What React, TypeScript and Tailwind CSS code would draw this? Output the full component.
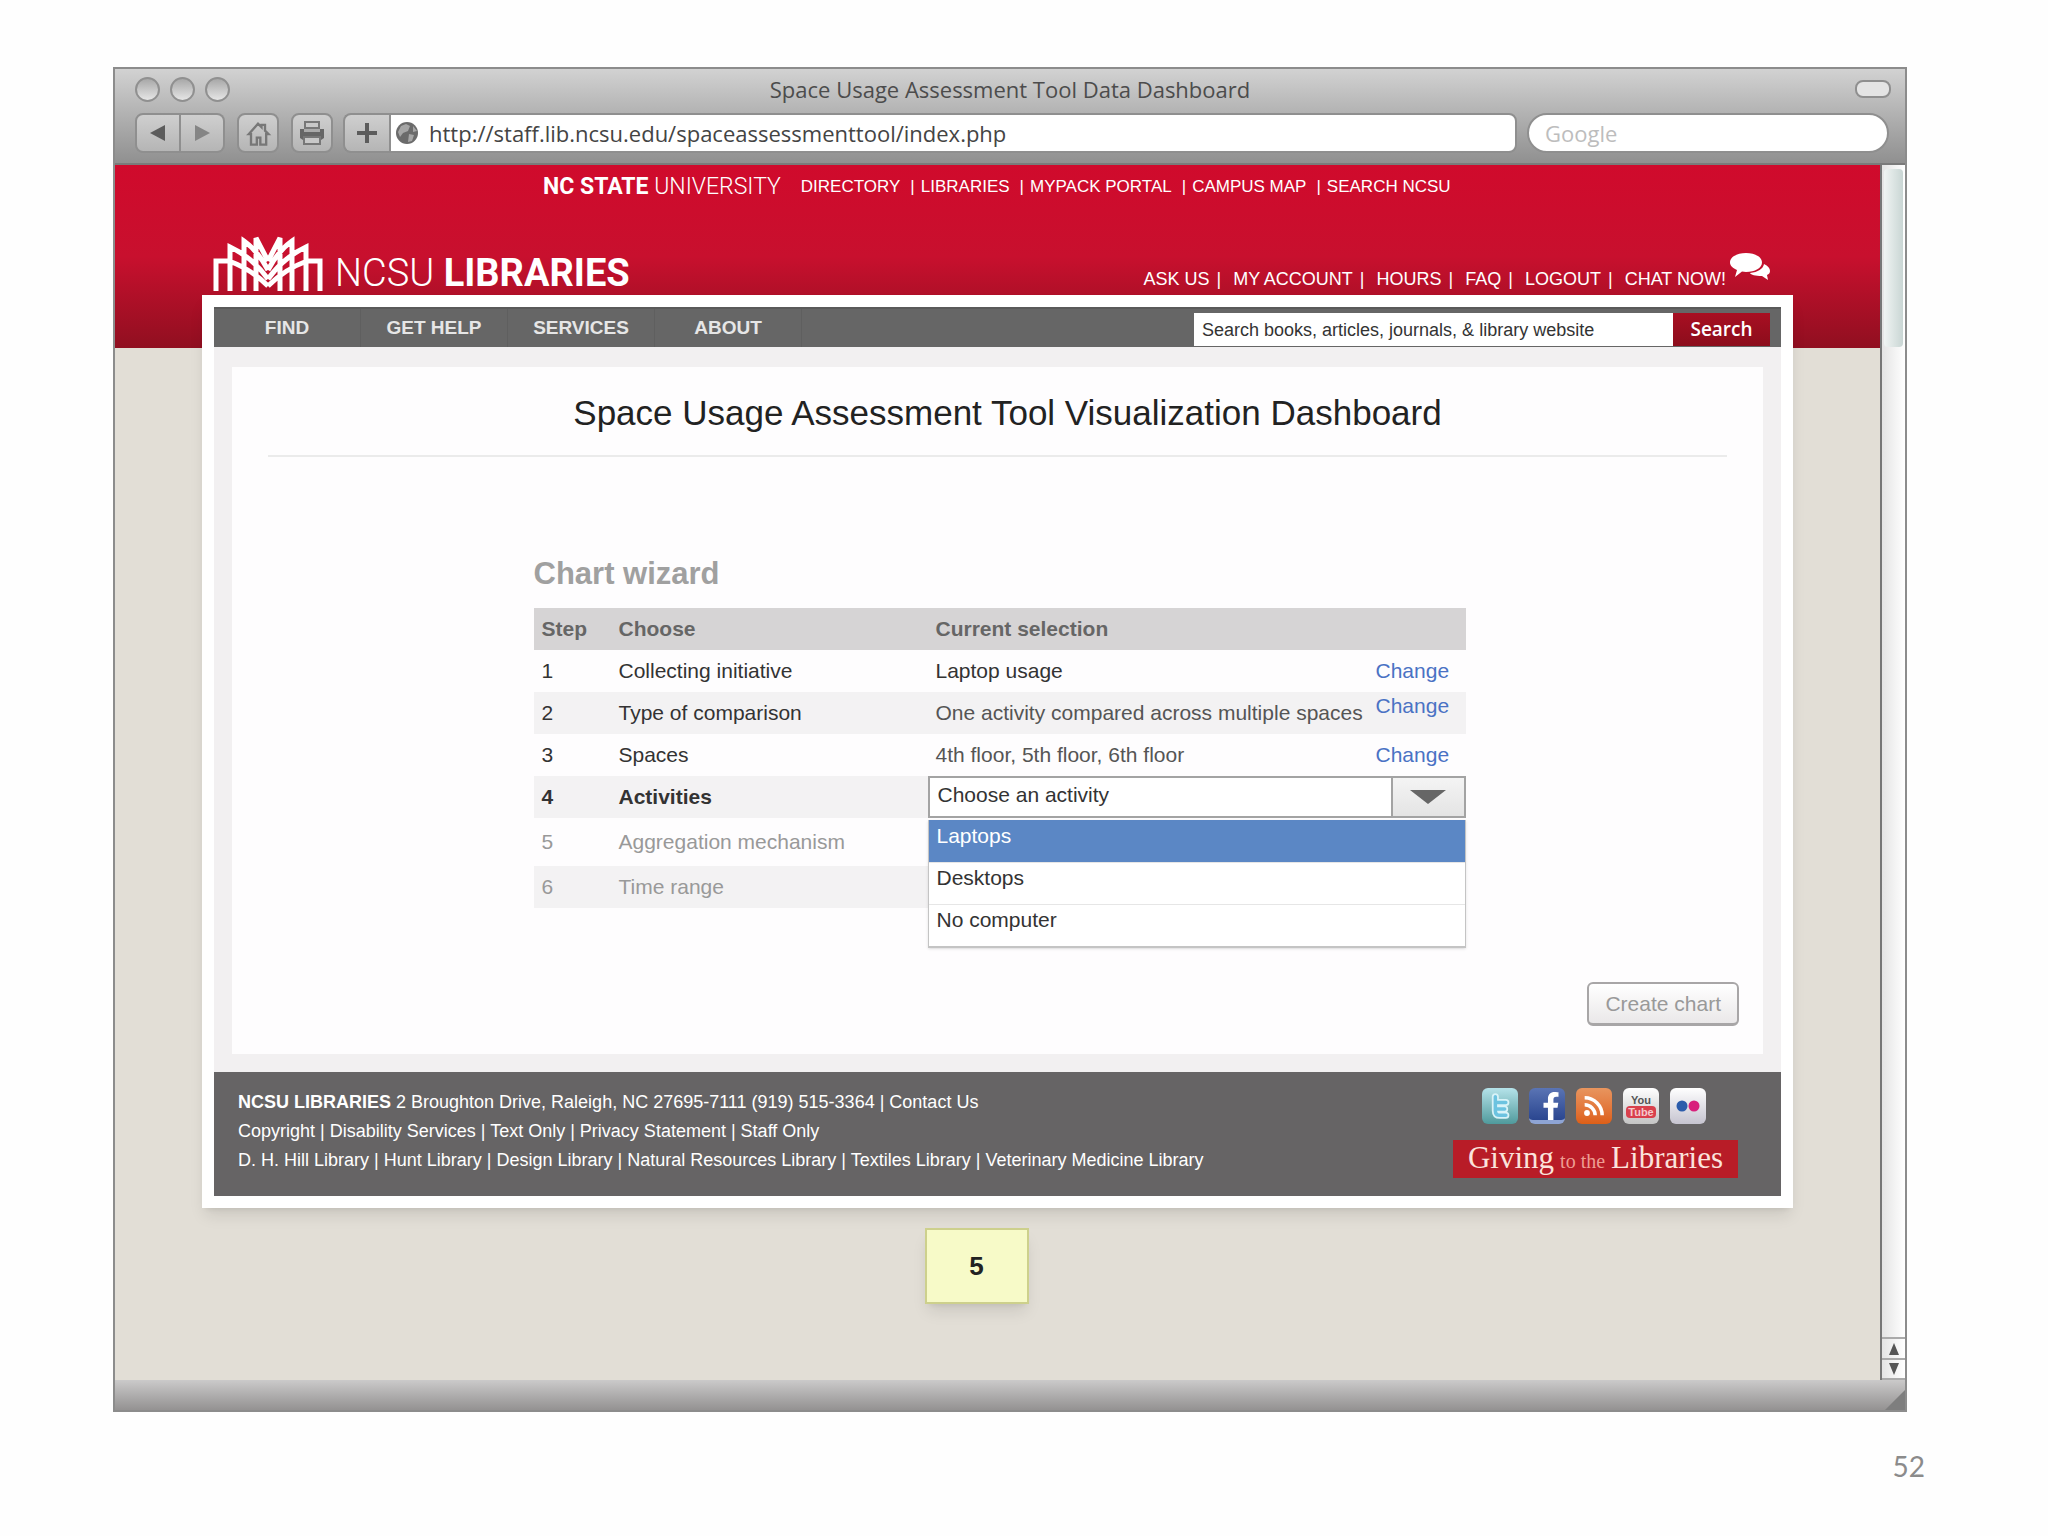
import { useState } from "react";
import { FaFacebookF } from "react-icons/fa";

const topLinks = ["DIRECTORY", "LIBRARIES", "MYPACK PORTAL", "CAMPUS MAP", "SEARCH NCSU"];
const accountLinks = ["ASK US", "MY ACCOUNT", "HOURS", "FAQ", "LOGOUT", "CHAT NOW!"];
const navItems = ["FIND", "GET HELP", "SERVICES", "ABOUT"];
const activities = ["Laptops", "Desktops", "No computer"];

const footerPolicies = ["Copyright", "Disability Services", "Text Only", "Privacy Statement", "Staff Only"];
const footerLibraries = [
    "D. H. Hill Library",
    "Hunt Library",
    "Design Library",
    "Natural Resources Library",
    "Textiles Library",
    "Veterinary Medicine Library",
];

function LibraryMark() {
    // one half of the fan, mirrored for the other side
    const half = "M3 58V28h13q22 8 39 25M17 58V14q22 10 38 32M31 58V8q14 10 24 29M43 58V5l12 23";
    return (
        <svg viewBox="0 0 110 58" className="h-[58px] w-[110px]" fill="none" stroke="#fff" strokeWidth="5">
            <path d={half} />
            <path d={half} transform="matrix(-1 0 0 1 110 0)" />
        </svg>
    );
}

function BrowserChrome() {
    const button =
        "flex h-10 items-center justify-center border-2 border-[#8f8f8f] bg-gradient-to-b from-[#cfcfcf] to-[#b5b5b5]";
    return (
        <div className="h-24 border-b-2 border-[#7a7a7a] bg-gradient-to-b from-[#d2d2d2] to-[#909090] pt-1.5">
            <div className="flex h-7 items-center px-5">
                <div className="flex flex-1 gap-2.5">
                    {["close", "minimize", "zoom"].map((name) => (
                        <button
                            key={name}
                            aria-label={name}
                            className="size-[25px] rounded-full border-2 border-[#909090] bg-gradient-to-b from-[#a8a8a8] to-[#e6e6e6]"
                        />
                    ))}
                </div>
                <h1 className="text-[22px] text-[#4c4c4c]">Space Usage Assessment Tool Data Dashboard</h1>
                <div className="flex flex-1 justify-end">
                    <button
                        aria-label="Toggle toolbar"
                        className="mr-[-6px] h-[18px] w-9 rounded-lg border-2 border-[#8f8f8f] bg-[#e4e4e4]"
                    />
                </div>
            </div>
            <div className="mt-2.5 flex pr-4 pl-5">
                <button aria-label="Back" className={`${button} w-[46px] rounded-l-lg`}>
                    <svg viewBox="0 0 16 16" className="size-4">
                        <path d="M15 0v16L0 8z" fill="#5c5c5c" />
                    </svg>
                </button>
                <button aria-label="Forward" className={`${button} w-11 rounded-r-lg border-l-0`}>
                    <svg viewBox="0 0 16 16" className="size-4">
                        <path d="M1 0v16l15-8z" fill="#858585" />
                    </svg>
                </button>
                <button aria-label="Home" className={`${button} ml-3 w-[42px] rounded-lg`}>
                    <svg viewBox="0 0 24 24" className="size-7" fill="none" stroke="#777" strokeWidth="2">
                        <path d="M4 13l8-9 3 3V5h3v5l3 3h-2v9h-5v-6h-3v6H6v-9z" />
                    </svg>
                </button>
                <button aria-label="Print" className={`${button} ml-3 w-[42px] rounded-lg`}>
                    <svg viewBox="0 0 28 28" className="size-7">
                        <path d="M7 3h14v6H7z" fill="#c8c8c8" stroke="#777" strokeWidth="2" />
                        <path d="M2 10h24v9l-3 2H5l-3-2z" fill="#666" />
                        <path d="M6 10h16v3H6z" fill="#aaa" />
                        <path d="M6 18h16v7H6z" fill="#c8c8c8" stroke="#777" strokeWidth="2" />
                    </svg>
                </button>
                <button aria-label="Add bookmark" className={`${button} ml-2.5 w-[46px] rounded-l-lg border-r-0`}>
                    <svg viewBox="0 0 20 20" className="size-5">
                        <path d="M8 0h4v8h8v4h-8v8H8v-8H0V8h8z" fill="#5c5c5c" />
                    </svg>
                </button>
                <div className="flex h-10 flex-1 items-center gap-2.5 rounded-r-lg border-2 border-[#8f8f8f] bg-white px-1">
                    <svg viewBox="0 0 24 24" className="size-6">
                        <circle cx="12" cy="12" r="11" fill="#6b6b6b" />
                        <path d="M11 3l4 2-2 5-5 2-3 4-2-5 3-6zM14 13l5 1-2 6-4 1zM18 5l4 5-4 1z" fill="#a6a6a6" />
                    </svg>
                    <input
                        aria-label="Address"
                        defaultValue="http://staff.lib.ncsu.edu/spaceassessmenttool/index.php"
                        className="min-w-0 flex-1 text-[22px] text-[#444] outline-none"
                    />
                </div>
                <input
                    aria-label="Web search"
                    placeholder="Google"
                    className="ml-2.5 h-10 w-[362px] rounded-full border-2 border-[#8f8f8f] bg-white px-4 text-[22px] text-[#444] outline-none placeholder:text-[#bdbdbd]"
                />
            </div>
        </div>
    );
}

function SiteHeader() {
    return (
        <header className="mx-[87px] flex h-[130px] flex-col justify-between px-[11px] text-white">
            <div className="ml-[330px] flex h-11 items-center gap-5">
                <a href="#" className="font-['Roboto'] text-[23px]">
                    <b>NC STATE</b> <span className="font-light">UNIVERSITY</span>
                </a>
                <nav className="flex text-[17px]">
                    {topLinks.map((label, i) => (
                        <span key={label} className="flex">
                            {i > 0 && <span className="mr-1.5 ml-2.5">|</span>}
                            <a href="#">{label}</a>
                        </span>
                    ))}
                </nav>
            </div>
            <div className="flex items-end justify-between">
                <a href="#" className="flex items-end gap-3 pb-1">
                    <LibraryMark />
                    <span className="font-['Roboto'] text-[38px] leading-9">
                        <span className="font-light">NCSU</span> <b>LIBRARIES</b>
                    </span>
                </a>
                <div className="flex items-end pr-3 pb-1.5">
                    <nav className="flex text-lg leading-5">
                        {accountLinks.map((label, i) => (
                            <span key={label} className="flex">
                                {i > 0 && <span className="mr-3 ml-[7px]">|</span>}
                                <a href="#">{label}</a>
                            </span>
                        ))}
                    </nav>
                    <svg viewBox="0 0 40 28" className="mb-2 ml-1 h-7 w-10" fill="#fff">
                        <path d="M16 0c9 0 16 4 16 9.500s-7 9.500-16 9.500l-4-.4L5 24l2-7C3 15 0 13 0 9.500 0 4 7 0 16 0z" />
                        <path d="M34 11c4 2 6 4 6 7 0 2-1 3-3 4l1 5-6-4c-7 0-11-1-12-3 8-1 13-4 14-9z" />
                    </svg>
                </div>
            </div>
        </header>
    );
}

function SiteNav() {
    return (
        <div className="flex h-10 items-end border-t-2 border-[#5a5a5a] bg-[#666] pr-[11px]">
            <nav className="flex flex-1 self-stretch">
                {navItems.map((label) => (
                    <a
                        key={label}
                        href="#"
                        className="flex w-[147px] items-center justify-center border-r border-[#5f5f5f] text-[19px] font-bold text-[#e6e6e6]"
                    >
                        {label}
                    </a>
                ))}
            </nav>
            <form className="flex h-[34px] pb-px" onSubmit={(e) => e.preventDefault()}>
                <input
                    aria-label="Search the library"
                    defaultValue="Search books, articles, journals, & library website"
                    className="w-[479px] bg-white px-2 text-lg text-[#333] outline-none"
                />
                <button className="w-[97px] bg-gradient-to-b from-[#a80f22] to-[#8c0d1c] font-['Open_Sans'] text-[19px] font-semibold text-white">
                    Search
                </button>
            </form>
        </div>
    );
}

function ActivityPicker() {
    const [activity, setActivity] = useState("");
    return (
        <div className="relative h-[42px] text-[21px] text-[#333]">
            <select
                aria-label="Activity"
                value={activity}
                onChange={(e) => setActivity(e.target.value)}
                className="h-[42px] w-full appearance-none border-2 border-[#a3a3a3] bg-white px-2 pb-1 outline-none"
            >
                <option value="">Choose an activity</option>
                {activities.map((name) => (
                    <option key={name}>{name}</option>
                ))}
            </select>
            <span className="pointer-events-none absolute top-0.5 right-0.5 flex h-[38px] w-[73px] items-center justify-center border-l-2 border-[#a3a3a3] bg-gradient-to-b from-[#f4f4f4] to-[#e4e4e4]">
                <svg viewBox="0 0 36 14" className="h-3.5 w-9">
                    <path d="M0 0h36L18 14z" fill="#666" />
                </svg>
            </span>
            <ul
                role="listbox"
                aria-label="Activities"
                className="absolute top-11 right-0 left-0 border-x border-b-2 border-[#c4c4c4] bg-white shadow"
            >
                {activities.map((name) => (
                    <li
                        key={name}
                        role="option"
                        aria-selected={name === "Laptops"}
                        onClick={() => setActivity(name)}
                        className="h-[42px] border-t border-[#e6e6e6] px-2 leading-[30px] aria-selected:border-[#5b87c5] aria-selected:bg-[#5b87c5] aria-selected:text-white"
                    >
                        {name}
                    </li>
                ))}
            </ul>
        </div>
    );
}

function ChartWizard() {
    const change = (
        <a href="#" className="text-[#4a72c4]">
            Change
        </a>
    );
    return (
        <section className="mx-auto w-[932px]">
            <h3 className="text-[31px] leading-9 font-bold text-[#a0a0a0]">Chart wizard</h3>
            <table className="mt-4 w-full table-fixed text-left text-[21px] leading-7 text-[#333]">
                <colgroup>
                    <col className="w-[77px]" />
                    <col className="w-[317px]" />
                    <col className="w-[440px]" />
                    <col />
                </colgroup>
                <thead>
                    <tr className="h-[42px] bg-[#d6d4d5] text-[#666]">
                        <th className="pl-2">Step</th>
                        <th className="pl-2">Choose</th>
                        <th className="pl-2" colSpan={2}>
                            Current selection
                        </th>
                    </tr>
                </thead>
                <tbody>
                    <tr className="h-[42px]">
                        <td className="pl-2">1</td>
                        <td className="pl-2">Collecting initiative</td>
                        <td className="pl-2">Laptop usage</td>
                        <td className="pl-2">{change}</td>
                    </tr>
                    <tr className="h-[42px] bg-[#f3f2f3]">
                        <td className="pl-2">2</td>
                        <td className="pl-2">Type of comparison</td>
                        <td className="pl-2 text-[#555]">One activity compared across multiple spaces</td>
                        <td className="pl-2 align-top">{change}</td>
                    </tr>
                    <tr className="h-[42px]">
                        <td className="pl-2">3</td>
                        <td className="pl-2">Spaces</td>
                        <td className="pl-2 text-[#555]">4th floor, 5th floor, 6th floor</td>
                        <td className="pl-2">{change}</td>
                    </tr>
                    <tr className="h-[42px] bg-[#f3f2f3] font-bold">
                        <td className="pl-2">4</td>
                        <td className="pl-2">Activities</td>
                        <td className="font-normal" colSpan={2}>
                            <ActivityPicker />
                        </td>
                    </tr>
                    <tr className="h-12 text-[#999]">
                        <td className="pl-2">5</td>
                        <td className="pl-2">Aggregation mechanism</td>
                        <td colSpan={2} />
                    </tr>
                    <tr className="h-[42px] bg-[#f3f2f3] text-[#999]">
                        <td className="pl-2">6</td>
                        <td className="pl-2">Time range</td>
                        <td colSpan={2} />
                    </tr>
                </tbody>
            </table>
        </section>
    );
}

function FooterLinks({ labels }: { labels: string[] }) {
    return (
        <p>
            {labels.map((label, i) => (
                <span key={label}>
                    {i > 0 && " | "}
                    <a href="#">{label}</a>
                </span>
            ))}
        </p>
    );
}

function SiteFooter() {
    const tile = "flex size-9 items-center justify-center overflow-hidden rounded-md";
    return (
        <footer className="flex h-[124px] justify-between bg-[#666465] pr-[43px] pl-6 text-white">
            <div className="pt-4 text-lg leading-[29px]">
                <p>
                    <b>NCSU LIBRARIES</b> 2 Broughton Drive, Raleigh, NC 27695-7111 (919) 515-3364 |{" "}
                    <a href="#">Contact Us</a>
                </p>
                <FooterLinks labels={footerPolicies} />
                <FooterLinks labels={footerLibraries} />
            </div>
            <div className="w-[285px] pt-4">
                <div className="flex gap-[11px] pl-[29px]">
                    <a href="#" aria-label="Twitter" className={`${tile} bg-gradient-to-b from-[#b5e3ea] to-[#4f9a9c]`}>
                        <svg viewBox="0 0 24 24" className="size-7" fill="none" strokeLinecap="round" strokeLinejoin="round">
                            <path d="M8 4v12q0 4 4 4h5M8 9h9M8 14.500h8" stroke="#d8f3f8" strokeWidth="6" />
                            <path d="M8 4v12q0 4 4 4h5M8 9h9M8 14.500h8" stroke="#6cc3e0" strokeWidth="3" />
                        </svg>
                    </a>
                    <a
                        href="#"
                        aria-label="Facebook"
                        className={`${tile} items-end justify-end border-b-4 border-[#8ea4d4] bg-gradient-to-b from-[#5a74b4] to-[#2b4690]`}
                    >
                        <FaFacebookF className="size-7" />
                    </a>
                    <a href="#" aria-label="RSS" className={`${tile} bg-gradient-to-b from-[#e8955e] to-[#dd5f16]`}>
                        <svg viewBox="0 0 24 24" className="size-7" fill="none" stroke="#fff" strokeWidth="3">
                            <circle cx="6" cy="18" r="2.500" fill="#fff" stroke="none" />
                            <path d="M4 11a9 9 0 0 1 9 9M4 5a15 15 0 0 1 15 15" />
                        </svg>
                    </a>
                    <a
                        href="#"
                        aria-label="YouTube"
                        className={`${tile} flex-col bg-gradient-to-b from-white to-[#c4c4c4] text-[11px] leading-3 font-bold text-[#555]`}
                    >
                        You
                        <span className="rounded bg-[#d9404c] px-0.5 text-[#f5c9cc]">Tube</span>
                    </a>
                    <a href="#" aria-label="Flickr" className={`${tile} bg-gradient-to-b from-white to-[#c6c4d0]`}>
                        <svg viewBox="0 0 24 12" className="h-3 w-6">
                            <circle cx="6" cy="6" r="5.500" fill="#2b5cab" />
                            <circle cx="18" cy="6" r="5.500" fill="#d8207c" />
                        </svg>
                    </a>
                </div>
                <a
                    href="#"
                    className="mt-4 flex h-[38px] items-baseline justify-center gap-1.5 bg-[#b81c27] font-['Liberation_Serif'] text-[31px] leading-9 text-[#fbe3dc]"
                >
                    Giving <span className="text-xl text-[#ee9c92]">to the</span> Libraries
                </a>
            </div>
        </footer>
    );
}

function Scrollbar() {
    return (
        <div className="flex w-[25px] flex-col justify-between border-l-2 border-[#777] bg-gradient-to-r from-[#e4e4e4] to-white">
            <div className="mx-0.5 mt-1 h-[178px] rounded bg-gradient-to-r from-[#f0f4f3] to-[#c9d6d4]" />
            <div>
                <button aria-label="Scroll up" className="flex h-[21px] w-full items-center justify-center border-t-2 border-[#aaa]">
                    <svg viewBox="0 0 12 12" className="size-3">
                        <path d="M6 0l5 12H1z" fill="#555" />
                    </svg>
                </button>
                <button aria-label="Scroll down" className="flex h-[22px] w-full items-center justify-center border-y-2 border-[#aaa]">
                    <svg viewBox="0 0 12 12" className="size-3">
                        <path d="M6 12L1 0h10z" fill="#555" />
                    </svg>
                </button>
            </div>
        </div>
    );
}

export default function App() {
    return (
        <div className="min-h-screen bg-[#fefefe] pt-[67px] pr-[141px] pl-[113px] font-['Liberation_Sans',sans-serif]">
            <div className="border-2 border-[#8c8c8c] font-['Open_Sans',sans-serif]">
                <BrowserChrome />
                <div className="flex font-['Liberation_Sans',sans-serif]">
                    <div className="flex-1 bg-[#e2ded6] bg-[linear-gradient(#d00a2c,#c8102e_50%,#900f20)] bg-[length:100%_183px] bg-no-repeat pb-[76px]">
                        <SiteHeader />
                        <main className="mx-[87px] border-[12px] border-white bg-[#f2f0f1] shadow-lg">
                            <SiteNav />
                            <div className="mx-[18px] mt-5 mb-[18px] bg-[#fefdfe] px-6 pb-7">
                                <h2 className="mx-3 border-b-2 border-[#ebebeb] pt-6 pb-5 pl-5 text-center text-[35px] leading-11 text-[#222]">
                                    Space Usage Assessment Tool Visualization Dashboard
                                </h2>
                                <div className="pt-[99px] pl-1">
                                    <ChartWizard />
                                </div>
                                <div className="mt-[74px] flex justify-end">
                                    <button className="h-11 rounded-md border-2 border-b-[3px] border-[#a8a6a7] bg-gradient-to-b from-white to-[#eae8e9] px-4 text-[21px] text-[#999]">
                                        Create chart
                                    </button>
                                </div>
                            </div>
                            <SiteFooter />
                        </main>
                        <div className="mt-5 flex justify-center pr-[42px]">
                            <div className="flex h-[76px] w-[104px] items-center justify-center border-2 border-[#cdd08c] bg-[#f7fac8] text-[26px] font-bold text-[#222] shadow-lg">
                                5
                            </div>
                        </div>
                    </div>
                    <Scrollbar />
                </div>
                <div className="flex h-[30px] items-end justify-end bg-gradient-to-b from-[#cbcaca] to-[#949292]">
                    <svg viewBox="0 0 20 20" className="size-5">
                        <path d="M20 0v20H0z" fill="#7e7e7e" />
                    </svg>
                </div>
            </div>
            <p className="mt-9 mr-[-18px] text-right font-['Lato'] text-[28px] leading-9 text-[#8b8b8b]">52</p>
        </div>
    );
}
